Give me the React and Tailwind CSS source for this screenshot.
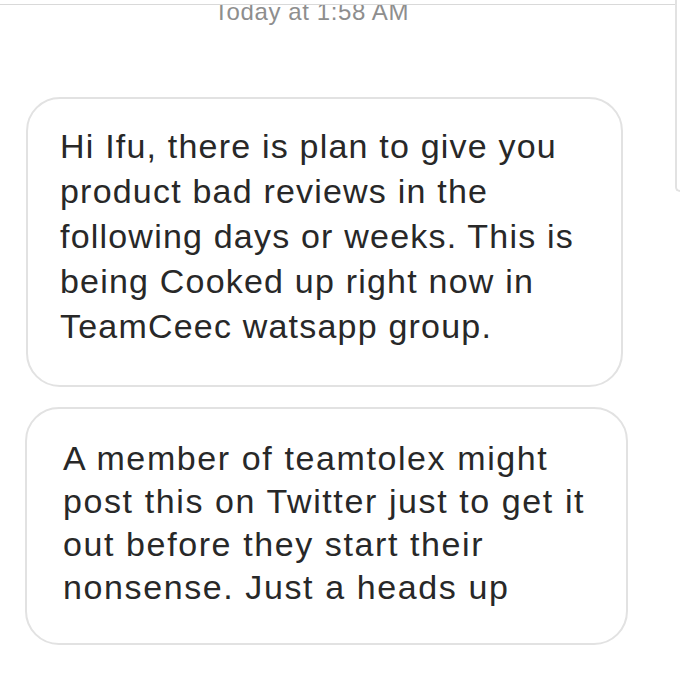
import React from "react";

const first = [
    "Hi Ifu, there is plan to give you",
    "product bad reviews in the",
    "following days or weeks. This is",
    "being Cooked up right now in",
    "TeamCeec watsapp group.",
];

const second = [
    "A member of teamtolex might",
    "post this on Twitter just to get it",
    "out before they start their",
    "nonsense. Just a heads up",
];

function Bubble({ lines, className, lineClass }) {
    return (
        <div className={`border-2 border-[#e2e2e2] rounded-[34px] bg-white ${className}`}>
            {lines.map((l) => (
                <div key={l} className={`whitespace-nowrap ${lineClass}`}>
                    {l}
                </div>
            ))}
        </div>
    );
}

export default function App() {
    return (
        <div
            className="w-[680px] h-[686px] overflow-hidden bg-white flex text-[#282828]"
            style={{ fontFamily: '"Liberation Sans", Arial, sans-serif' }}
        >
            <div className="w-[675px] shrink-0 flex flex-col">
                {/* cut-off top edge of the previous message area */}
                <div className="h-[5px] shrink-0 bg-white border-b border-[#d9d9d9] relative z-10" />
                <div className="-mt-[5px] ml-[214px] text-[24px] leading-[24px] tracking-[0.6px] text-[#8e8e8e]">
                    Today at 1:58 AM
                </div>

                <Bubble
                    lines={first}
                    className="mt-[73px] ml-[26px] w-[597px] pt-[25px] pb-[36px] pl-[32px]"
                    lineClass="text-[34px] leading-[45px] tracking-[1.2px]"
                />
                <Bubble
                    lines={second}
                    className="mt-[20px] ml-[25px] w-[603px] pt-[28px] pb-[34px] pl-[36px]"
                    lineClass="text-[34px] leading-[43px] tracking-[1.6px]"
                />
            </div>
            <div className="flex-1">
                <div className="h-[192px] border-l-2 border-b-2 border-[#e2e2e2] rounded-bl-[6px]" />
            </div>
        </div>
    );
}
